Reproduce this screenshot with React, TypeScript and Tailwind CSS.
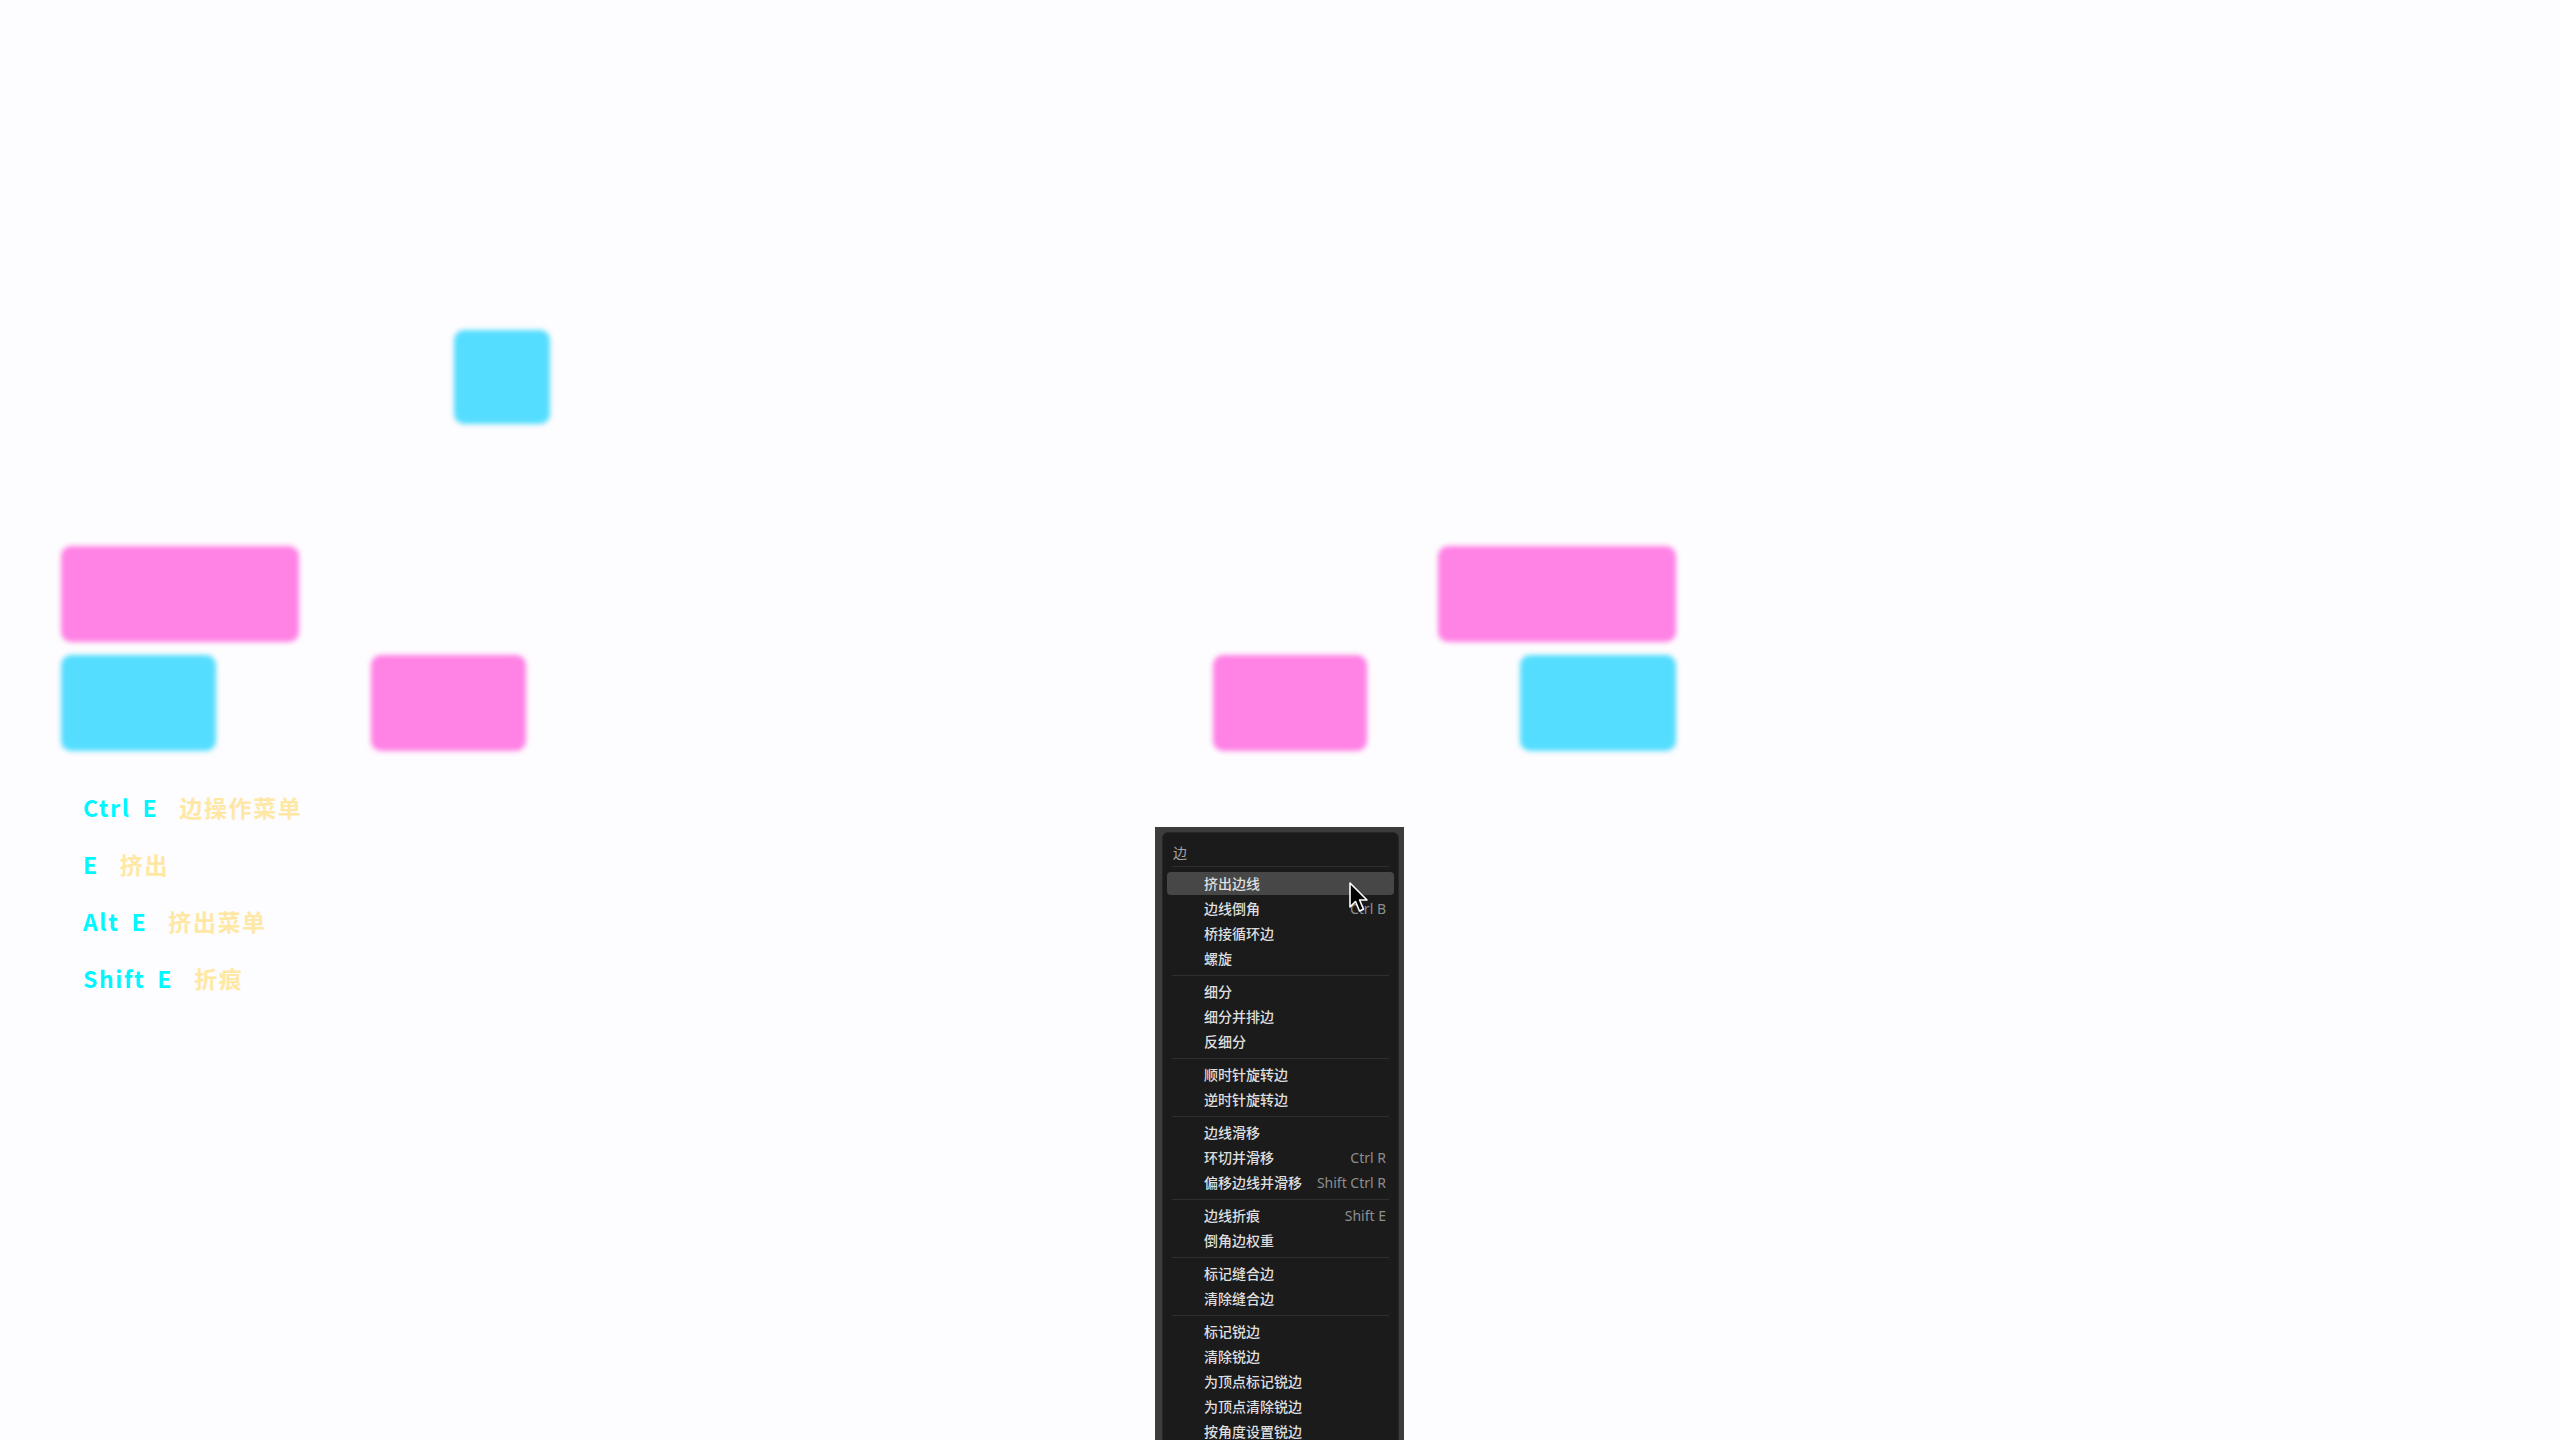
import React from "react";

type Block = { x: number; y: number; w: number; h: number; color: "pink" | "cyan" };

const blocks: Block[] = [
  { x: 454, y: 330, w: 96, h: 94, color: "cyan" },
  { x: 61, y: 546, w: 238, h: 96, color: "pink" },
  { x: 61, y: 655, w: 155, h: 96, color: "cyan" },
  { x: 371, y: 655, w: 155, h: 96, color: "pink" },
  { x: 1213, y: 655, w: 154, h: 96, color: "pink" },
  { x: 1438, y: 546, w: 238, h: 96, color: "pink" },
  { x: 1520, y: 655, w: 156, h: 96, color: "cyan" },
];

const hints = [
  { keys: ["Ctrl", "E"], label: "边操作菜单" },
  { keys: ["E"], label: "挤出" },
  { keys: ["Alt", "E"], label: "挤出菜单" },
  { keys: ["Shift", "E"], label: "折痕" },
];

type Item = { label: string; shortcut?: string; active?: boolean };

const groups: Item[][] = [
  [
    { label: "挤出边线", active: true },
    { label: "边线倒角", shortcut: "Ctrl B" },
    { label: "桥接循环边" },
    { label: "螺旋" },
  ],
  [{ label: "细分" }, { label: "细分并排边" }, { label: "反细分" }],
  [{ label: "顺时针旋转边" }, { label: "逆时针旋转边" }],
  [
    { label: "边线滑移" },
    { label: "环切并滑移", shortcut: "Ctrl R" },
    { label: "偏移边线并滑移", shortcut: "Shift Ctrl R" },
  ],
  [{ label: "边线折痕", shortcut: "Shift E" }, { label: "倒角边权重" }],
  [{ label: "标记缝合边" }, { label: "清除缝合边" }],
  [
    { label: "标记锐边" },
    { label: "清除锐边" },
    { label: "为顶点标记锐边" },
    { label: "为顶点清除锐边" },
    { label: "按角度设置锐边" },
  ],
];

function Separator() {
  return (
    <div className="h-[8px] flex items-center px-[9px]">
      <div className="h-px w-full bg-[#2f2f2f]" />
    </div>
  );
}

function MenuRow({ item }: { item: Item }) {
  return (
    <div className="h-[25px] px-[4px] py-px">
      <div
        className={
          "h-full flex items-center justify-between pl-[37px] pr-[8px] rounded-[4px] " +
          (item.active ? "bg-[#474747]" : "")
        }
      >
        <span className="text-[14px] font-medium text-[#dedede]">{item.label}</span>
        {item.shortcut && (
          <span className="text-[14px] text-[#8e8e8e] font-['Noto_Sans',sans-serif]">
            {item.shortcut}
          </span>
        )}
      </div>
    </div>
  );
}

function Cursor() {
  return (
    <svg
      className="absolute left-[1348px] top-[881px]"
      width="22"
      height="34"
      viewBox="0 0 22 34"
    >
      <path
        d="M2 2 L2 26 L7.5 20.5 L11.5 30 L15.5 28.3 L11.6 19 L19 19 Z"
        fill="#000"
        stroke="#fff"
        strokeWidth="1.6"
        strokeLinejoin="round"
      />
    </svg>
  );
}

export default function App() {
  return (
    <div className="relative w-[2560px] h-[1440px] overflow-hidden bg-[#fdfcfe] font-['Noto_Sans_CJK_SC',sans-serif]">
      {/* blurred blocks */}
      {blocks.map((b, i) => (
        <div
          key={i}
          className={
            "absolute rounded-[10px] blur-[2.5px] " +
            (b.color === "pink" ? "bg-[#ff82e5]" : "bg-[#55ddff]")
          }
          style={{ left: b.x, top: b.y, width: b.w, height: b.h }}
        />
      ))}

      {/* hotkey hints */}
      <div className="absolute left-[83px] top-[792px] flex flex-col gap-[27px]">
        {hints.map((h) => (
          <div key={h.label} className="h-[30px] flex items-center text-[23px] font-bold leading-[30px] tracking-[0.07em]">
            <div className="flex gap-[12px] text-[#00f7ff]">
              {h.keys.map((k) => (
                <span key={k}>{k}</span>
              ))}
            </div>
            <span className="ml-[21px] text-[#ffe8a4]">{h.label}</span>
          </div>
        ))}
      </div>

      {/* edge menu */}
      <div className="absolute left-[1155px] top-[827px] w-[249px] h-[640px] bg-[#3c3c3c] pt-[5px] pl-[7px] pr-[5px]">
        <div className="h-full bg-[#1b1b1b] rounded-[6px] border border-[#262626] pt-[7px]">
          <div className="h-[24px] flex items-center px-[10px] text-[14px] text-[#a3a3a3]">边</div>
          <div className="mt-[2px] mb-[4px] mx-[9px] h-px bg-[#2f2f2f]" />
          {groups.map((g, gi) => (
            <div key={gi}>
              {gi > 0 && <Separator />}
              {g.map((it) => (
                <MenuRow key={it.label} item={it} />
              ))}
            </div>
          ))}
        </div>
      </div>

      <Cursor />
    </div>
  );
}
